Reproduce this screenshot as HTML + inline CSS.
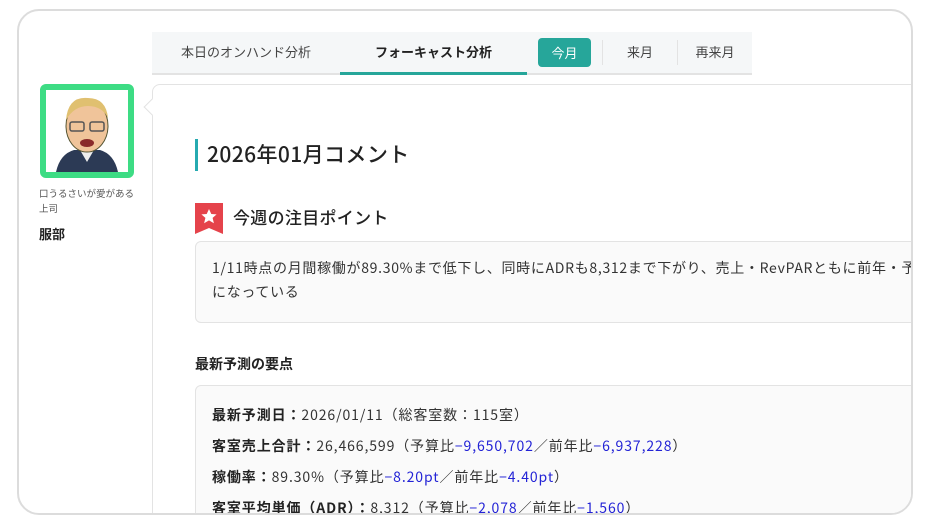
<!DOCTYPE html>
<html><head><meta charset="utf-8"><style>
*{margin:0;padding:0;box-sizing:border-box}
body{width:930px;height:523px;background:#fff;font-family:"Noto Sans CJK JP","Liberation Sans",sans-serif;color:#333;position:relative;overflow:hidden}
.frame{position:absolute;left:17px;top:9px;width:896px;height:506px;border:2px solid #dcdcdc;border-radius:22px;overflow:hidden;background:#fff}
.abs{position:absolute}
.tabs{left:133px;top:21px;width:600px;height:43px;background:#f5f7f8;border-bottom:2px solid #e3e3e3}
.tab{position:absolute;top:0;height:43px;line-height:40px;font-size:13px;text-align:center;color:#444}
.card{left:133px;top:73px;width:800px;height:440px;border:1px solid #e3e3e3;border-radius:8px;background:#fff}
.blue{color:#2323d6}
b{font-weight:700;color:#222}
</style></head><body>
<div class="frame">
 <div class="abs tabs">
  <div class="tab" style="left:0;width:188px">本日のオンハンド分析</div>
  <div class="tab" style="left:188px;width:187px;font-weight:700;color:#222;border-bottom:3px solid #26a69a">フォーキャスト分析</div>
  <div class="abs" style="left:386px;top:6px;width:53px;height:29px;background:#26a69a;border-radius:4px;color:#fff;font-size:13px;text-align:center;line-height:29px">今月</div>
  <div class="abs" style="left:450px;top:8px;width:1px;height:25px;background:#e3e3e3"></div>
  <div class="tab" style="left:451px;width:74px">来月</div>
  <div class="abs" style="left:525px;top:8px;width:1px;height:25px;background:#e3e3e3"></div>
  <div class="tab" style="left:526px;width:74px">再来月</div>
 </div>
 <div class="abs" style="left:21px;top:73px;width:94px;height:94px;border:6px solid #3ddc84;border-radius:6px;background:#fff;overflow:hidden">
  <svg width="82" height="82" viewBox="0 0 82 82">
   <path d="M10 82 Q14 64 28 60 L54 60 Q68 64 72 82Z" fill="#2c3a55"/>
   <path d="M34 60 L41 72 L48 60Z" fill="#eee"/>
   <ellipse cx="41" cy="36" rx="21" ry="26" fill="#f0c49a" stroke="#553" stroke-width="1"/>
   <path d="M20 30 Q22 6 42 8 Q60 8 62 28 Q56 16 42 16 Q28 16 20 30Z" fill="#e0c070"/>
   <rect x="24" y="32" width="14" height="9" rx="2" fill="none" stroke="#555" stroke-width="1.5"/>
   <rect x="44" y="32" width="14" height="9" rx="2" fill="none" stroke="#555" stroke-width="1.5"/>
   <ellipse cx="41" cy="53" rx="7" ry="4" fill="#8a2a2a"/>
  </svg>
 </div>
 <div class="abs" style="left:127px;top:90px;width:12px;height:12px;background:#fff;border-left:1px solid #e3e3e3;border-bottom:1px solid #e3e3e3;transform:rotate(45deg);z-index:2"></div>
 <div class="abs" style="left:20px;top:175px;font-size:9.5px;line-height:15px;color:#555;width:100px">口うるさいが愛がある<br>上司</div>
 <div class="abs" style="left:20px;top:213px;font-size:13px;font-weight:700;color:#222">服部</div>
 <div class="abs card">
  <div class="abs" style="left:42px;top:54px;width:3px;height:32px;background:#26aab0"></div>
  <div class="abs" style="left:54px;top:53px;font-size:21px;line-height:32px;color:#222;font-weight:500;letter-spacing:0.4px">2026年01月コメント</div>
  <svg class="abs" style="left:42px;top:118px" width="28" height="31" viewBox="0 0 28 31"><path d="M0 0H28V31L14 25L0 31Z" fill="#e5434b"/><path d="M14 6l2.3 5 5.3.4-4 3.5 1.3 5.3L14 17.4 9.1 20.2l1.3-5.3-4-3.5 5.3-.4z" fill="#fff"/></svg>
  <div class="abs" style="left:80px;top:120px;font-size:17px;line-height:24px;color:#222;font-weight:500;letter-spacing:0.3px">今週の注目ポイント</div>
  <div class="abs" style="left:42px;top:156px;width:760px;height:82px;background:#fafafa;border:1px solid #e3e3e3;border-radius:6px;padding:14px 16px;font-size:14px;line-height:24px;white-space:nowrap;letter-spacing:0.7px">1/11時点の月間稼働が89.30%まで低下し、同時にADRも8,312まで下がり、売上・RevPARともに前年・予算を下回る水準<br>になっている</div>
  <div class="abs" style="left:42px;top:269px;font-size:14px;line-height:20px;font-weight:700;color:#222">最新予測の要点</div>
  <div class="abs" style="left:42px;top:300px;width:760px;height:140px;background:#fafafa;border:1px solid #e3e3e3;border-radius:6px;padding:14px 16px;font-size:14px;line-height:31px;white-space:nowrap;letter-spacing:0.9px">
   <div><b>最新予測日：</b>2026/01/11（総客室数：115室）</div>
   <div><b>客室売上合計：</b>26,466,599（予算比<span class="blue">−9,650,702</span>／前年比<span class="blue">−6,937,228</span>）</div>
   <div><b>稼働率：</b>89.30%（予算比<span class="blue">−8.20pt</span>／前年比<span class="blue">−4.40pt</span>）</div>
   <div><b>客室平均単価（ADR）：</b>8,312（予算比<span class="blue">−2,078</span>／前年比<span class="blue">−1,560</span>）</div>
  </div>
 </div>
</div>
</body></html>
